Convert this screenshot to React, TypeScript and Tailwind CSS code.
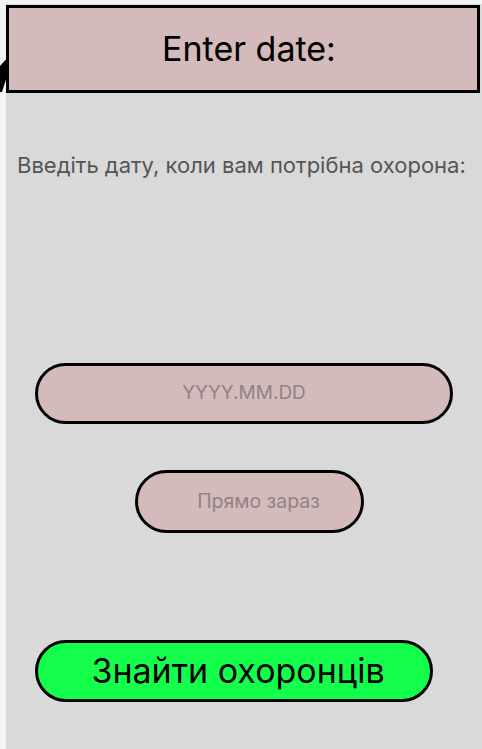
export default function App(): JSX.Element {
    return (
        <div className="relative w-[482px] h-[749px] bg-[#f4f4f4] overflow-hidden" style={{ fontFamily: "Inter, 'Noto Sans', sans-serif" }}>
            <svg className="absolute left-0 top-[56px]" width="10" height="36" viewBox="0 0 10 36">
                <polygon points="0,10 9,0 9,14 2,36 0,36" fill="#000" />
            </svg>
            <div className="ml-[6px] mt-[4px] h-[745px] bg-[#d9d9d9] flex flex-col">
                <div className="mt-[1px] w-[474px] h-[88px] bg-[#d4baba] border-[3px] border-black flex items-center justify-center pl-[12px]">
                    <span className="text-[34px] leading-[40px] text-black">Enter date:</span>
                </div>
                <div className="mt-[57px] pl-[11px] text-[22px] leading-[30px] text-[#555555]">Введіть дату, коли вам потрібна охорона:</div>
                <div className="mt-[183px] ml-[29px] w-[418px] h-[61px] rounded-full bg-[#d4baba] border-[3px] border-black flex items-center justify-center">
                    <span className="text-[19px] text-[#8f8484]">YYYY.MM.DD</span>
                </div>
                <div className="mt-[46px] ml-[129px] w-[229px] h-[63px] rounded-full bg-[#d4baba] border-[3px] border-black flex items-center justify-center pl-[18px]">
                    <span className="text-[19.5px] text-[#8f8484]">Прямо зараз</span>
                </div>
                <div className="mt-[107px] ml-[29px] w-[398px] h-[62px] rounded-full bg-[#13ff4c] border-[3px] border-black flex items-center justify-center pl-[8px]">
                    <span className="text-[34px] leading-[40px] text-black">Знайти охоронців</span>
                </div>
            </div>
        </div>
    )
}
